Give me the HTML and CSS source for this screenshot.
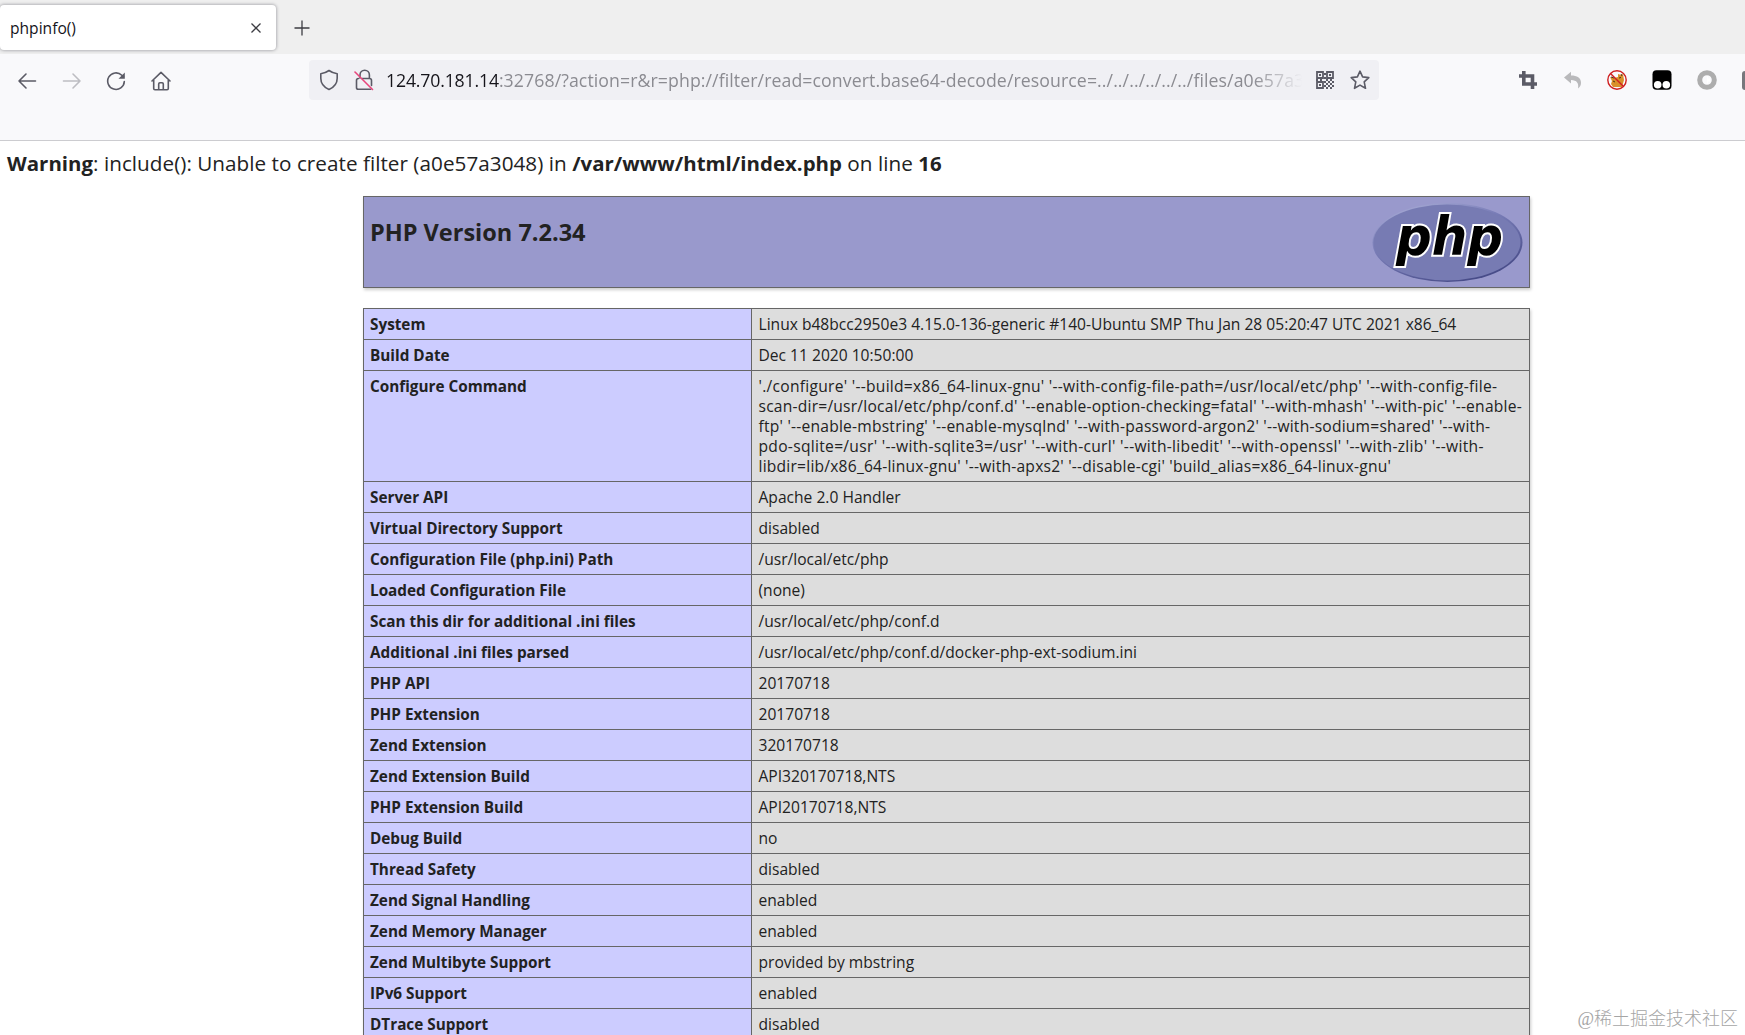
FILE: index.html
```
<!DOCTYPE html>
<html lang="en">
<head>
<meta charset="utf-8">
<title>phpinfo()</title>
<link rel="stylesheet" href="styles.css">
</head>
<body>
<header class="tabs">
  <div class="tab"><span>phpinfo()</span>
    <svg class="close" width="12" height="12" viewBox="0 0 12 12"><path d="M1.5 1.5l9 9M10.500 1.500l-9 9"/></svg>
  </div>
  <svg class="plus" width="16" height="16" viewBox="0 0 16 16"><path d="M8 .5v15M.5 8h15"/></svg>
</header>
<nav class="toolbar">
  <div class="nav-buttons">
    <svg width="20" height="20" viewBox="0 0 20 20"><path d="M18.500 10H2M9 3l-7 7 7 7"/></svg>
    <svg class="faded" width="20" height="20" viewBox="0 0 20 20"><path d="M1.500 10H18M11 3l7 7-7 7"/></svg>
    <svg width="20" height="20" viewBox="0 0 20 20"><path d="M18.300 10.500a8.300 8.300 0 1 1-2.500-6.300l1.700 1.600"/><path class="solid" d="M18.800 1.500v6.300h-6.300z"/></svg>
    <svg width="20" height="20" viewBox="0 0 20 20"><path d="M1 10l9-8.700L19 10M2.700 9v8.500q0 1.200 1.200 1.200h12.200q1.200 0 1.200-1.200V9M7.700 18.500V13q0-1.200 1.200-1.200h2.200q1.200 0 1.200 1.200v5.500"/></svg>
  </div>
  <div class="urlbar">
    <svg width="20" height="22" viewBox="0 0 20 22"><path d="M10 1.500c2.600 1.900 5 2.700 8.200 3.200v4.500c0 5.200-2.900 8.900-8.200 11.300-5.300-2.400-8.200-6.100-8.200-11.300V4.700C5 4.200 7.400 3.400 10 1.500z"/></svg>
    <svg class="lock" width="20" height="22" viewBox="0 0 20 22"><path d="M6 9V6a4.700 4.700 0 0 1 9.400 0v3.500M4.500 9.500q-2 0-2 2v7q0 1.800 1.800 1.800h12.400M8 9.500h7.500q2 0 2 2v5"/><path class="strike" d="M1 3l17.500 17.500"/></svg>
    <div class="address"><span class="host">124.70.181.14</span><span class="path">:32768/?action=r&amp;r=php://filter/read=convert.base64-decode/resource=../../../../../../files/a0e57a3</span></div>
    <svg class="qr" width="18" height="18" viewBox="0 0 18 18"><path d="M1 1h6v6H1zM11 1h6v6h-6zM1 11h6v6H1z"/><path class="solid" d="M3 3h2v2H3zM13 3h2v2h-2zM3 13h2v2H3zM8 2h2v2H8zM8 6h2v2H8zM0 8h2v2H0zM4 8h2v2H4zM10 8h2v2h-2zM14 8h2v2h-2zM8 10h2v2H8zM12 10h2v2h-2zM16 10h2v2h-2zM10 12h2v2h-2zM14 12h2v2h-2zM8 14h2v2H8zM12 14h2v2h-2zM16 14h2v2h-2zM10 16h2v2h-2zM14 16h2v2h-2z"/></svg>
    <svg class="star" width="20" height="20" viewBox="0 0 20 20"><path d="M10 1.200l2.600 5.700 6.200.7-4.600 4.300 1.300 6.400-5.500-3.200-5.500 3.200 1.300-6.400-4.600-4.300 6.200-.7z"/></svg>
  </div>
  <div class="extensions">
    <svg class="crop" width="18" height="18" viewBox="0 0 18 18"><path d="M0 5h13.500v13M4.800 0v13H18"/></svg>
    <svg class="undo" width="18" height="18" viewBox="0 0 18 18"><path d="M0 6.500L7 .8v3.700c6 0 10 2 10 7.200 0 2.400-1 4.300-3 5.800 1-5-1-8.500-7-8.500v3.500z"/></svg>
    <svg width="20" height="20" viewBox="0 0 20 20"><path fill="#d9902a" d="M3 7l4 1 4-1V4l3 1 2-1 1 6-2 7H6l-2-3 1-3z"/><path fill="none" stroke="#493018" d="M6 11l2 1M12 8l2-.5M4 7l3 1M14 4l1 2"/><circle cx="10" cy="10" r="9.200" fill="none" stroke="#cf1f20" stroke-width="1.400"/><path d="M3.500 3.500l13 13" stroke="#cf1f20" stroke-width="1.400"/></svg>
    <svg width="20" height="20" viewBox="0 0 20 20"><rect x=".5" y=".3" width="19" height="19.400" rx="4"/><circle cx="5.700" cy="14.800" r="3.800" fill="#fff"/><circle cx="14.300" cy="14.800" r="3.800" fill="#fff"/></svg>
    <svg width="20" height="20" viewBox="0 0 20 20"><circle cx="10" cy="10" r="7.300" fill="#fafafc" stroke="#adadad" stroke-width="5"/><path d="M10 6.500h1v2h2v3h-2v2h-1z" fill="#fff"/></svg>
    <span class="clipped"></span>
  </div>
</nav>
<main>
  <p class="warning"><b>Warning</b>: include(): Unable to create filter (a0e57a3048) in <b>/var/www/html/index.php</b> on line <b>16</b></p>
  <section class="banner">
    <h1>PHP Version 7.2.34</h1>
    <svg class="logo" width="152" height="82" viewBox="0 0 152 82">
      <defs>
        <linearGradient id="rim" x1="0" y1="0" x2=".6" y2="1"><stop offset="0" stop-color="#b2b5dc"/><stop offset=".45" stop-color="#7a7eb8"/><stop offset="1" stop-color="#484c89"/></linearGradient>
      </defs>
      <ellipse cx="76.500" cy="41.500" rx="75" ry="39.500" fill="url(#rim)"/>
      <ellipse cx="76" cy="41.500" rx="73.500" ry="38" fill="#777bb3"/>
      <text x="25" y="54" textLength="107" lengthAdjust="spacingAndGlyphs">php</text>
    </svg>
  </section>
  <table class="info">
    <tr><th>System</th><td>Linux b48bcc2950e3 4.15.0-136-generic #140-Ubuntu SMP Thu Jan 28 05:20:47 UTC 2021 x86_64</td></tr>
    <tr><th>Build Date</th><td>Dec 11 2020 10:50:00</td></tr>
    <tr><th>Configure Command</th><td class="command"><span class="wide">'./configure' '--build=x86_64-linux-gnu' '--with-config-file-path=/usr/local/etc/php' '--with-config-file-</span><br>scan-dir=/usr/local/etc/php/conf.d' '--enable-option-checking=fatal' '--with-mhash' '--with-pic' '--enable-<br>ftp' '--enable-mbstring' '--enable-mysqlnd' '--with-password-argon2' '--with-sodium=shared' '--with-<br><span class="wider">pdo-sqlite=/usr' '--with-sqlite3=/usr' '--with-curl' '--with-libedit' '--with-openssl' '--with-zlib' '--with-</span><br>libdir=lib/x86_64-linux-gnu' '--with-apxs2' '--disable-cgi' 'build_alias=x86_64-linux-gnu'</td></tr>
    <tr><th>Server API</th><td>Apache 2.0 Handler</td></tr>
    <tr><th>Virtual Directory Support</th><td>disabled</td></tr>
    <tr><th>Configuration File (php.ini) Path</th><td>/usr/local/etc/php</td></tr>
    <tr><th>Loaded Configuration File</th><td>(none)</td></tr>
    <tr><th>Scan this dir for additional .ini files</th><td>/usr/local/etc/php/conf.d</td></tr>
    <tr><th>Additional .ini files parsed</th><td>/usr/local/etc/php/conf.d/docker-php-ext-sodium.ini</td></tr>
    <tr><th>PHP API</th><td>20170718</td></tr>
    <tr><th>PHP Extension</th><td>20170718</td></tr>
    <tr><th>Zend Extension</th><td>320170718</td></tr>
    <tr><th>Zend Extension Build</th><td>API320170718,NTS</td></tr>
    <tr><th>PHP Extension Build</th><td>API20170718,NTS</td></tr>
    <tr><th>Debug Build</th><td>no</td></tr>
    <tr><th>Thread Safety</th><td>disabled</td></tr>
    <tr><th>Zend Signal Handling</th><td>enabled</td></tr>
    <tr><th>Zend Memory Manager</th><td>enabled</td></tr>
    <tr><th>Zend Multibyte Support</th><td>provided by mbstring</td></tr>
    <tr><th>IPv6 Support</th><td>enabled</td></tr>
    <tr><th>DTrace Support</th><td>disabled</td></tr>
  </table>
</main>
<div class="watermark">@稀土掘金技术社区</div>
</body>
</html>
```
FILE: styles.css
```
* { box-sizing: border-box; }
html, body { height: 100%; }
body {
  margin: 0;
  overflow: hidden;
  background: #fff;
  color: #222;
  font-family: "Open Sans", "Noto Sans", sans-serif;
  position: relative;
}
svg { display: block; flex: none; }

.tabs {
  height: 54px;
  padding-top: 1px;
  background: #efefef;
  display: flex;
  align-items: center;
  gap: 18px;
}
.tab {
  width: 276px;
  height: 45px;
  padding: 0 14px 0 10px;
  background: #fff;
  border-radius: 4px;
  box-shadow: 0 0 3px 1px #b4b4b8;
  display: flex;
  align-items: center;
  justify-content: space-between;
  font-size: 15.6px;
  color: #15141a;
}
.close, .plus { fill: none; stroke: #3c3c42; stroke-width: 1.3; }

.toolbar {
  height: 87px;
  padding-top: 6px;
  background: #f9f9fb;
  border-bottom: 1px solid #ccccd0;
  display: flex;
  align-items: flex-start;
}
.nav-buttons {
  width: 309px;
  height: 41px;
  padding-left: 17px;
  display: flex;
  align-items: center;
  gap: 24.7px;
}
.nav-buttons svg, .urlbar svg {
  fill: none;
  stroke: #5b5b66;
  stroke-width: 1.6;
  stroke-linejoin: round;
  stroke-linecap: round;
}
.nav-buttons .faded { stroke: #bdbdc2; }
svg .solid { fill: #5b5b66; stroke: none; }
.urlbar {
  width: 1070px;
  height: 40px;
  padding: 0 9px 0 10px;
  border-radius: 4px;
  background: #f0f0f4;
  display: flex;
  align-items: center;
}
.urlbar .lock { margin: 0 12px 0 15px; }
.urlbar .lock .strike { stroke: #e8467c; }
.address {
  flex: 1;
  overflow: hidden;
  white-space: nowrap;
  line-height: 40px;
  font-size: 17.7px;
  color: #8b8b91;
  mask-image: linear-gradient(to right, #000 calc(100% - 50px), transparent);
}
.host { color: #15141a; letter-spacing: -.17px; }
.path { letter-spacing: .09px; }
.urlbar .qr { margin: 0 16px 0 14px; stroke-width: 1.8; stroke-linejoin: miter; }
.extensions {
  height: 40px;
  margin-left: auto;
  display: flex;
  align-items: center;
  gap: 25px;
}
.crop { fill: none; stroke: #5b5b66; stroke-width: 3.6; margin-right: 2px; }
.undo { fill: #b9b9bb; }
.clipped { width: 3px; height: 19px; border-radius: 3px 0 0 3px; background: #77777c; }

.warning {
  margin: 0;
  padding: 7px 0 0 7px;
  font-size: 20.7px;
  line-height: 30px;
  letter-spacing: .03px;
  white-space: nowrap;
}
.warning b { font-size: 20.4px; }
.banner {
  width: 1167px;
  height: 92px;
  margin: 18px 0 20px 363px;
  padding: 4px 6px 0;
  border: 1px solid #666;
  background: #9999cc;
  box-shadow: 1px 2px 3px #ccc;
  display: flex;
  justify-content: space-between;
}
h1 { margin: 14px 0 0; font-size: 23.5px; line-height: 34px; }
.logo text {
  font: italic bold 53px "DejaVu Sans", sans-serif;
  fill: #000;
  stroke: #fff;
  stroke-width: 4px;
  paint-order: stroke;
}
.info {
  width: 1167px;
  margin-left: 363px;
  border-collapse: collapse;
  table-layout: fixed;
  box-shadow: 1px 2px 3px #ccc;
  font-size: 15.6px;
  line-height: 20px;
}
.info th, .info td {
  height: 31px;
  padding: 5px 0 5px 6px;
  border: 1px solid #666;
  text-align: left;
  vertical-align: top;
  white-space: nowrap;
}
.info th { width: 388px; background: #ccccff; font-size: 15.3px; }
.info td { padding-left: 6.5px; background: #ddd; }
.info .command { letter-spacing: .22px; }
.info .wide { letter-spacing: .27px; }
.info .wider { letter-spacing: .3px; }

.watermark {
  position: absolute;
  right: 7px;
  bottom: 3px;
  font: 18px/26px "Liberation Serif", "Noto Sans CJK SC", sans-serif;
  font-weight: 300;
  color: #a5a5a5;
}
```
